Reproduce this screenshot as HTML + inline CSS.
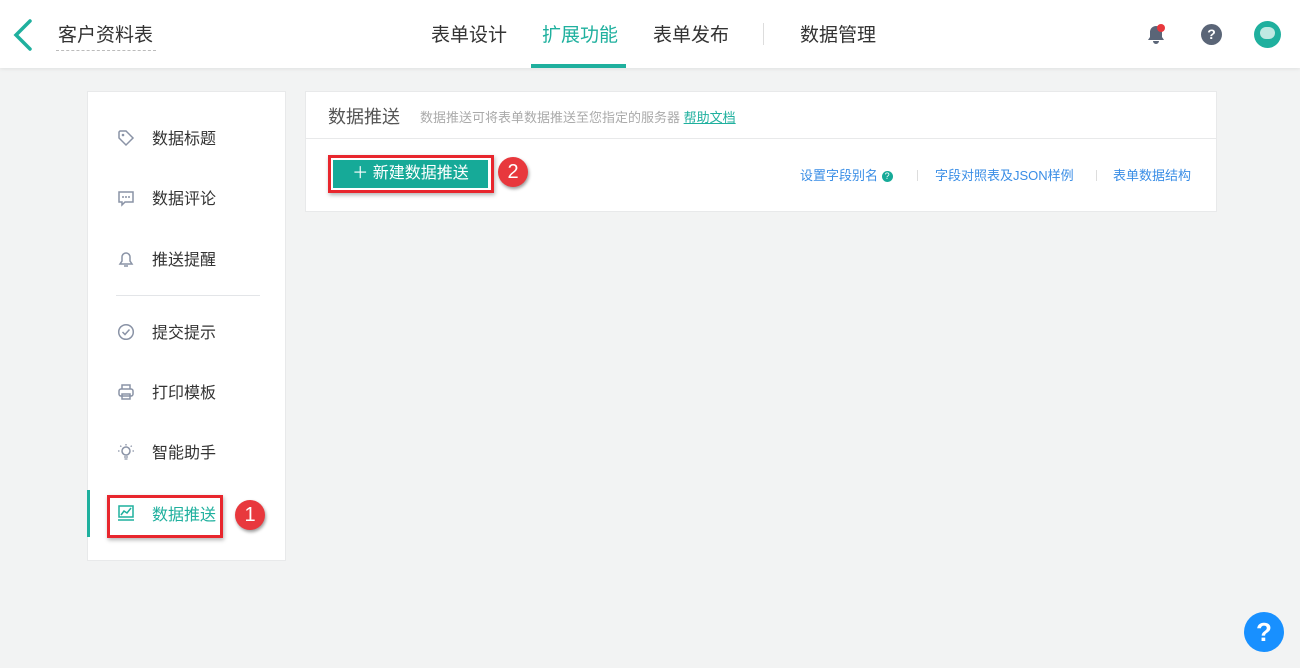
<!DOCTYPE html>
<html><head><meta charset="utf-8"><style>
*{margin:0;padding:0;box-sizing:border-box}
body{width:1300px;height:668px;background:#f2f3f3;font-family:"Liberation Sans","Noto Sans CJK SC",sans-serif;position:relative;overflow:hidden;color:#333}
.a{position:absolute}
.hdr{left:0;top:0;width:1300px;height:68px;background:#fff;box-shadow:0 1px 4px rgba(0,0,0,.08)}
.nav{top:23px;font-size:19px;color:#333;line-height:26px}
.side{left:87px;top:91px;width:199px;height:470px;background:#fff;border:1px solid #e8e9ea}
.it{left:152px;font-size:16px;color:#333;line-height:22px}
.ic{left:117px;width:18px;height:18px}
.main{left:305px;top:91px;width:912px;height:121px;background:#fff;border:1px solid #e8e9ea}
.badge{width:30px;height:30px;border-radius:50%;background:#e8383d;color:#fff;font-size:20px;text-align:center;line-height:30px;box-shadow:1px 2px 3px rgba(0,0,0,.4)}
.lk{top:167px;font-size:13px;color:#3a8ee6;line-height:18px}
</style></head><body>
<div class="a hdr"></div>
<svg class="a" style="left:10px;top:18px" width="24" height="34"><path d="M20 3 L6 17 L20 31" stroke="#1fb09e" stroke-width="3.5" fill="none" stroke-linecap="round"/></svg>
<div class="a" style="left:58px;top:23px;font-size:19px;line-height:26px;color:#333">客户资料表</div>
<div class="a" style="left:56px;top:50px;width:100px;border-top:1px dashed #bbb"></div>
<div class="a nav" style="left:431px">表单设计</div>
<div class="a nav" style="left:542px;color:#1fb09e">扩展功能</div>
<div class="a" style="left:531px;top:64px;width:95px;height:4px;background:#1fb09e"></div>
<div class="a nav" style="left:653px">表单发布</div>
<div class="a" style="left:763px;top:23px;width:1px;height:22px;background:#ddd"></div>
<div class="a nav" style="left:800px">数据管理</div>
<svg class="a" style="left:1145px;top:22px" width="22" height="24"><path d="M3 18 L5 15 V10 A6 6 0 0 1 17 10 V15 L19 18 Z M8 19 A3 3 0 0 0 14 19Z" fill="#5a6577"/><circle cx="16" cy="6" r="4" fill="#e8383d"/></svg>
<div class="a" style="left:1201px;top:24px;width:21px;height:21px;border-radius:50%;background:#5a6577;color:#fff;font-weight:bold;font-size:14px;text-align:center;line-height:21px">?</div>
<div class="a" style="left:1254px;top:21px;width:27px;height:27px;border-radius:50%;background:#1fb09e"><div style="margin:6px auto;width:15px;height:12px;border-radius:7px;background:#bfe9e2"></div></div>

<div class="a side"></div>
<div class="a" style="left:87px;top:490px;width:3px;height:47px;background:#1fb09e"></div>
<svg class="a ic" style="top:129px" viewBox="0 0 18 18"><path d="M2 3 V9 L9 16 L16 9 L9 2 H3Z" fill="none" stroke="#8a93a6" stroke-width="1.5"/><circle cx="6" cy="6" r="1.3" fill="#8a93a6"/></svg>
<div class="a it" style="top:129px">数据标题</div>
<svg class="a ic" style="top:189px" viewBox="0 0 18 18"><path d="M2 3 H16 V13 H8 L5 16 V13 H2Z" fill="none" stroke="#8a93a6" stroke-width="1.5"/><circle cx="6" cy="8" r="1" fill="#8a93a6"/><circle cx="9" cy="8" r="1" fill="#8a93a6"/><circle cx="12" cy="8" r="1" fill="#8a93a6"/></svg>
<div class="a it" style="top:189px">数据评论</div>
<svg class="a ic" style="top:250px" viewBox="0 0 18 18"><path d="M3 14 H15 L13 11 V7 A4 4 0 0 0 5 7 V11Z M7 16 H11" fill="none" stroke="#8a93a6" stroke-width="1.5"/></svg>
<div class="a it" style="top:250px">推送提醒</div>
<div class="a" style="left:116px;top:295px;width:144px;height:1px;background:#e3e5e8"></div>
<svg class="a ic" style="top:323px" viewBox="0 0 18 18"><circle cx="9" cy="9" r="7.3" fill="none" stroke="#8a93a6" stroke-width="1.5"/><path d="M5.5 9 L8 11.5 L12.5 6.5" fill="none" stroke="#8a93a6" stroke-width="1.5"/></svg>
<div class="a it" style="top:323px">提交提示</div>
<svg class="a ic" style="top:383px" viewBox="0 0 18 18"><rect x="2" y="6" width="14" height="7" rx="2" fill="none" stroke="#8a93a6" stroke-width="1.5"/><path d="M5 6 V2 H13 V6 M5 11 H13 V16 H5Z" fill="none" stroke="#8a93a6" stroke-width="1.5"/></svg>
<div class="a it" style="top:383px">打印模板</div>
<svg class="a ic" style="top:443px" viewBox="0 0 18 18"><circle cx="9" cy="8" r="4" fill="none" stroke="#8a93a6" stroke-width="1.5"/><path d="M7 14 H11 M7.5 16 H10.5 M9 1 V2.5 M1 8 H2.5 M15.5 8 H17 M3.3 2.7 L4.3 3.7 M14.7 2.7 L13.7 3.7" stroke="#8a93a6" stroke-width="1.3"/></svg>
<div class="a it" style="top:443px">智能助手</div>
<svg class="a ic" style="top:504px" viewBox="0 0 18 18"><rect x="2" y="2" width="14" height="11" fill="none" stroke="#1fb09e" stroke-width="1.5"/><path d="M4 11 L7 7 L10 9 L14 4 M1 16 H17" fill="none" stroke="#1fb09e" stroke-width="1.5"/></svg>
<div class="a it" style="top:505px;color:#1fb09e">数据推送</div>
<div class="a" style="left:107px;top:495px;width:116px;height:43px;border:3px solid #e8262d;box-shadow:1px 2px 4px rgba(0,0,0,.3)"></div>
<div class="a badge" style="left:235px;top:500px">1</div>

<div class="a main"></div>
<div class="a" style="left:306px;top:138px;width:910px;height:1px;background:#e8e9ea"></div>
<div class="a" style="left:328px;top:105px;font-size:18px;line-height:24px;color:#555">数据推送</div>
<div class="a" style="left:420px;top:109px;font-size:13px;line-height:18px;color:#aaa">数据推送可将表单数据推送至您指定的服务器 <span style="color:#1fb09e;text-decoration:underline">帮助文档</span></div>
<div class="a" style="left:328px;top:155px;width:166px;height:38px;border:3px solid #e8262d;box-shadow:1px 2px 4px rgba(0,0,0,.3)"></div>
<div class="a" style="left:333px;top:160px;width:155px;height:28px;background:#16aa98;color:#fff;font-size:16px;line-height:28px;text-align:center">＋ 新建数据推送</div>
<div class="a badge" style="left:498px;top:157px">2</div>
<div class="a lk" style="left:800px">设置字段别名 <span style="display:inline-block;width:11px;height:11px;border-radius:50%;background:#16aa98;color:#fff;font-size:9px;line-height:11px;text-align:center;vertical-align:1px">?</span></div>
<div class="a" style="left:917px;top:170px;width:1px;height:11px;background:#ddd"></div>
<div class="a lk" style="left:935px">字段对照表及JSON样例</div>
<div class="a" style="left:1096px;top:170px;width:1px;height:11px;background:#ddd"></div>
<div class="a lk" style="left:1113px">表单数据结构</div>

<div class="a" style="left:1244px;top:612px;width:40px;height:40px;border-radius:50%;background:#1890ff;color:#fff;font-size:26px;font-weight:bold;text-align:center;line-height:40px">?</div>
</body></html>
